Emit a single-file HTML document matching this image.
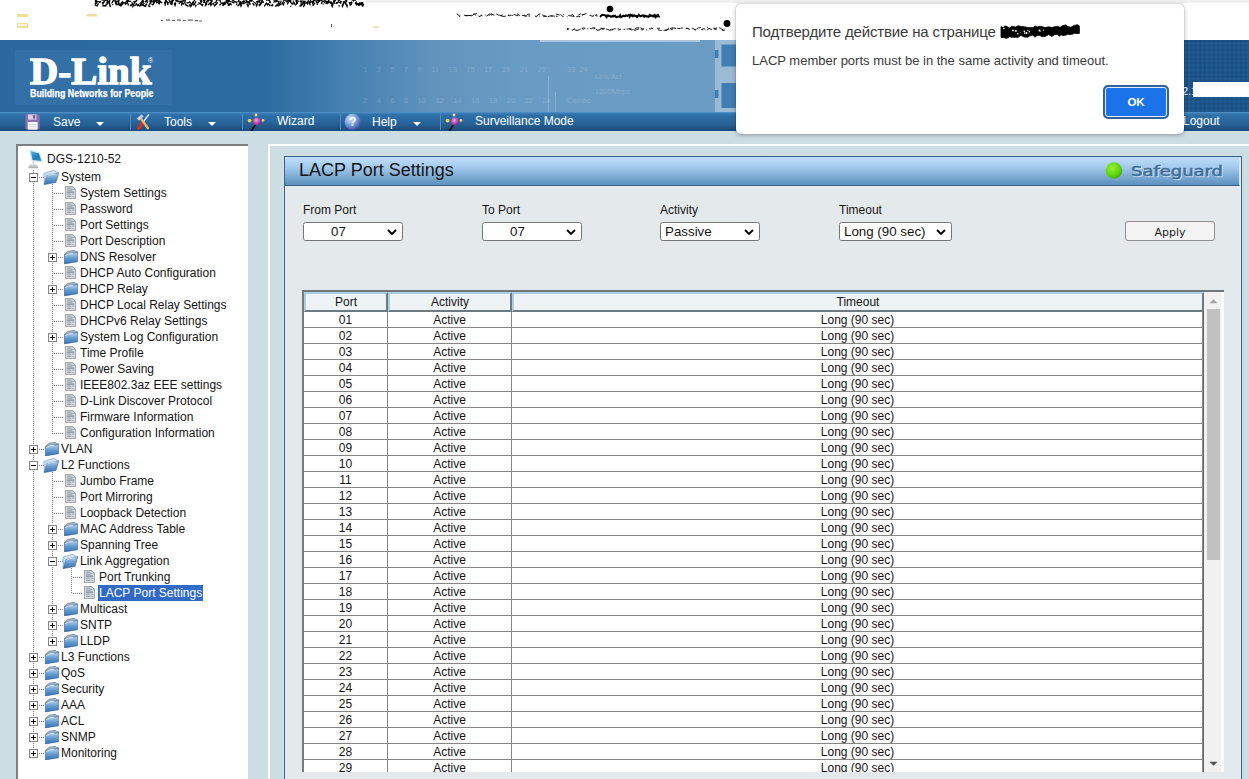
<!DOCTYPE html>
<html lang="ru">
<head>
<meta charset="utf-8">
<title>DGS-1210-52 - LACP Port Settings</title>
<style>
html,body{margin:0;padding:0}
body{width:1249px;height:779px;overflow:hidden;position:relative;background:#fff;font-family:"Liberation Sans",Arial,sans-serif;font-size:12px;color:#141414}
.abs,.ic,.tl,.hd,.vd{position:absolute}
#hdr{position:absolute;left:0;top:40px;width:1249px;height:72px;background:linear-gradient(90deg,#2a689d 0,#2c6ba0 265px,#4782b2 350px,#6294be 440px,#6a9bc2 520px,#6c9dc4 100%)}
#hdrR{position:absolute;left:1150px;top:40px;width:99px;height:72px;background-color:#205c92;background-image:linear-gradient(90deg,rgba(20,70,120,.4) 1.5px,transparent 1.5px),linear-gradient(180deg,rgba(20,70,120,.4) 1.5px,transparent 1.5px);background-size:4.5px 4.5px}
#logo{position:absolute;left:15px;top:50px;width:157px;height:55px;background:#3270a6}
#tb{position:absolute;left:0;top:112px;width:1249px;height:20px;background:linear-gradient(180deg,#3f80b8 0,#2f70a8 2px,#29669c 9px,#1b4c7c 18px,#1b4c7c 19px,#53799f 19px);border-top:1px solid #4a8cc4;box-sizing:border-box}
.fnt{color:#fff;opacity:.17;font-size:7.5px;line-height:9px;white-space:nowrap;word-spacing:7.4px}
.tbt{position:absolute;color:#fff;font-size:12px;line-height:14px;white-space:nowrap}
.sep{position:absolute;top:114px;width:1px;height:16px;background:#4d8ec7}
.arr{position:absolute;width:0;height:0;border-left:4px solid transparent;border-right:4px solid transparent;border-top:4px solid #fff}
#main{position:absolute;left:0;top:131px;width:1249px;height:648px;background:#cddde4}
#treep{position:absolute;left:16px;top:144px;width:232px;height:640px;background:#fff;border-left:2px solid #7f7f7f;border-top:2px solid #7f7f7f;box-sizing:border-box}
.tl{font-size:12px;line-height:16px;height:16px;white-space:nowrap;color:#141414;padding:0 1px}
.tl.sel{background:#316ac5;color:#fff}
.hd{height:1px;background-image:linear-gradient(90deg,#808080 50%,transparent 50%);background-size:2px 1px;background-position:0 0}
.vd{width:1px;background-image:linear-gradient(180deg,#808080 50%,transparent 50%);background-size:1px 2px}
#frame{position:absolute;left:268px;top:144px;width:990px;height:640px;border-left:2px solid #fff;border-top:2px solid #fff;box-sizing:border-box;background:#cddde4}
#panel{position:absolute;left:284px;top:156px;width:958px;height:630px;border:1px solid #3a6285;box-sizing:border-box;background:#e4eaec;box-shadow:inset 1px 0 0 #dbeffb,-1px 0 0 #cfe5f2}
#ptitle{position:absolute;left:285px;top:157px;width:955px;border-right:1px solid #cfe6f8;height:29px;background:linear-gradient(180deg,#bfdffb 0,#a6cbee 35%,#7aa8d1 72%,#5c90be 100%);border-bottom:1px solid #3a6285;box-sizing:border-box}
#ptxt{position:absolute;left:299px;top:159px;font-size:18px;line-height:22px;white-space:nowrap}
.lbl{position:absolute;top:202px;font-size:12px;line-height:16px;white-space:nowrap}
.selb{position:absolute;top:222px;height:19px;box-sizing:border-box;border:1px solid #767676;border-radius:2.5px;background:#fff;font-size:13.33px;line-height:17px;white-space:nowrap}
.selb span{position:absolute;top:0}
.selb svg{position:absolute;right:5px;top:6px}
#apply{position:absolute;left:1125px;top:221px;width:90px;height:20px;box-sizing:border-box;border:1px solid #8f8f8f;border-radius:3px;background:#f3f3f3;font-family:"DejaVu Sans","Liberation Sans",sans-serif;font-size:11px;line-height:22px;text-align:center;color:#1c1c1c}
#tbl{position:absolute;left:302px;top:290px;width:922px;height:482px;background:#fff;overflow:hidden;border-left:2px solid #787b7d;border-top:2px solid #6f777b;box-sizing:border-box}
.th{position:absolute;top:292px;height:20px;box-sizing:border-box;background:#eef3f6;border-left:2px solid #a9cfe0;border-top:2px solid #a9cfe0;border-right:2px solid #6f7a80;border-bottom:2px solid #6f7a80;font-size:12px;line-height:16px;text-align:center}
.tr{position:absolute;left:304px;width:898px;height:16px;border-bottom:1px solid #868686;box-sizing:border-box;font-size:12px;line-height:15px;background:#fff}
.tr span{position:absolute;top:0;text-align:center;height:15px;line-height:17px}
.c1{left:0;width:83px}
.c2{left:83px;width:123px;border-left:1px solid #868686}
.c3{left:207px;width:691px;border-left:1px solid #868686}
#sb{position:absolute;left:1204px;top:292px;width:20px;height:480px;background:linear-gradient(90deg,#f1f1f1 0,#f1f1f1 17px,#fbfbfb 17px)}
#vr{position:absolute;left:1202px;top:312px;width:2px;height:461px;background:linear-gradient(90deg,#8a8a8a 0,#8a8a8a 1px,#5f6467 1px)}
#sbth{position:absolute;left:1207px;top:309px;width:13px;height:251px;background:#c1c1c1}
#dlg{position:absolute;left:736px;top:4px;width:448px;height:130px;background:#fff;border-radius:5px;box-shadow:0 1px 5px rgba(0,0,0,.3),0 0 1px rgba(0,0,0,.35)}
#dt{position:absolute;left:752px;top:22px;font-size:15px;line-height:20px;color:#3a3a3a;white-space:nowrap;letter-spacing:-.16px}
#dm{position:absolute;left:752px;top:52px;font-size:13px;line-height:18px;color:#3a3a3a;white-space:nowrap}
#ok{position:absolute;left:1103px;top:85px;width:66px;height:34px;box-sizing:border-box;border-radius:5px;background:#1a73e8;border:2px solid #2f60a0;box-shadow:inset 0 0 0 1px #e4eeff;color:#fff;font-weight:bold;font-size:11.5px;line-height:30px;text-align:center}
</style>
</head>
<body>
<svg width="0" height="0" style="position:absolute">
<defs>
<symbol id="i-plus" viewBox="0 0 9 9"><rect x=".5" y=".5" width="8" height="8" fill="#fff" stroke="#848484"/><path d="M2 4.5h5M4.5 2v5" stroke="#000" stroke-width="1"/></symbol>
<symbol id="i-minus" viewBox="0 0 9 9"><rect x=".5" y=".5" width="8" height="8" fill="#fff" stroke="#848484"/><path d="M2 4.5h5" stroke="#000" stroke-width="1"/></symbol>
<symbol id="i-doc" viewBox="0 0 11 13"><path d="M.4.4H7L10.4 3.6V12.6H.4z" fill="#dfe4e9" stroke="#7f8b97" stroke-width=".8"/><path d="M7 .4V3.6H10.4z" fill="#f3f6f8" stroke="#7f8b97" stroke-width=".6"/><path d="M1.8 2.1H6M1.8 4.1H7.2" stroke="#7f8c99" stroke-width="1"/><path d="M1.8 6.1H9" stroke="#5f6c79" stroke-width="1"/><path d="M1.8 8.2H6.4M1.8 10.4H6.4" stroke="#7f8c99" stroke-width="1"/><path d="M7.4 7.6h1.6v1.3H7.4zM7.4 9.9h1.6v1.3H7.4z" fill="#9aa5b0"/></symbol>
<linearGradient id="gf" x1="0" y1="0" x2="0" y2="1"><stop offset="0" stop-color="#bcd6ee"/><stop offset=".45" stop-color="#6ba0d3"/><stop offset="1" stop-color="#3670ae"/></linearGradient>
<linearGradient id="gb" x1="0" y1="0" x2="0" y2="1"><stop offset="0" stop-color="#dbe8f5"/><stop offset="1" stop-color="#9dbfe0"/></linearGradient>
<symbol id="i-closed" viewBox="0 0 14 14"><path d="M1.3 3.6L3.8 1.3 10.4.3 11.8 1.5 13.5 1.7 13.3 4 1 5.8z" fill="#9db4cb" stroke="#54728f" stroke-width=".6"/><path d="M.5 4.5L13.7 2.4 13.5 11.8.3 13.9z" fill="url(#gf)" stroke="#3b6590" stroke-width=".6"/><path d="M1.3 5.6Q4.5 3.2 9 3.6" fill="none" stroke="#f1f7fc" stroke-width="1" opacity=".9"/></symbol>
<symbol id="i-open" viewBox="0 0 16 15"><path d="M.8 3.2L6 1.6 11.5.2 12.6 1.8 15.7 2.4 13 12.4 1.2 14.5z" fill="url(#gb)" stroke="#6c8fb3" stroke-width=".5"/><path d="M4.2 5.6L15.7 2.8 12.8 12.3 1.1 14.5z" fill="url(#gf)" stroke="#3d6793" stroke-width=".5"/><path d="M4.6 6.2Q8 4 12.5 4" fill="none" stroke="#f2f7fc" stroke-width=".8" opacity=".85"/></symbol>
<linearGradient id="gm" x1="0" y1="0" x2="1" y2="1"><stop offset="0" stop-color="#5fb4e6"/><stop offset=".6" stop-color="#1c7dbd"/><stop offset="1" stop-color="#2d8fcf"/></linearGradient>
<linearGradient id="gs" x1="0" y1="0" x2="0" y2="1"><stop offset="0" stop-color="#e4e6e8"/><stop offset="1" stop-color="#a4a8ac"/></linearGradient>
<symbol id="i-root" viewBox="0 0 18 20"><path d="M1.9 1.3L11.4 3.9 14.2 12.6 4 11.6z" fill="url(#gm)" stroke="#d5e6f3" stroke-width="1.3" stroke-linejoin="round"/><path d="M4.6 11.6h1.6v3h-1.6z" fill="#c9ced3"/><path d="M.3 19.3a5 4.6 0 0 1 10 0z" fill="url(#gs)"/></symbol>
</defs>
</svg>

<!-- top strip scribbles -->
<svg class="abs" style="left:0;top:0" width="1249" height="40">
<rect x="366" y="0" width="883" height="3" fill="#f0f0f0"/>
<path d="M95.0 2.4 L97.0 5.9 L98.8 2.8 L100.9 0.4 L102.8 3.7 L105.3 -0.3 L106.8 -0.3 L109.3 4.2 L110.3 6.4 L113.1 3.9 L115.2 0.2 L116.2 3.0 L117.3 0.4 L118.7 -0.8 L120.5 2.3 L123.1 2.9 L125.2 2.7 L127.4 2.4 L128.9 6.5 L131.8 5.3 L134.1 1.4 L135.5 1.2 L136.5 4.7 L138.2 5.3 L139.9 6.2 L142.5 -1.0 L143.8 5.8 L145.7 6.4 L147.4 -0.5 L149.5 4.8 L151.0 -0.3 L152.6 6.2 L155.0 -0.1 L156.4 -0.2 L157.4 5.0 L158.7 3.2 L160.5 0.4 L162.9 -0.0 L165.0 -0.1 L166.8 0.6 L168.3 6.3 L170.7 1.3 L173.4 0.6 L175.1 5.4 L177.2 -0.2 L180.1 0.6 L181.5 4.8 L183.1 1.2 L184.2 -0.3 L186.2 0.8 L188.3 1.8 L190.1 6.2 L192.0 3.3 L194.6 0.4 L195.8 5.8 L198.3 0.9 L199.7 4.5 L202.4 0.5 L205.1 5.6 L207.2 2.2 L208.4 -0.7 L211.2 0.8 L213.5 0.9 L216.0 3.5 L217.5 0.3 L219.8 -0.5 L221.2 3.2 L223.8 3.6 L225.2 5.9 L226.6 -0.9 L228.0 2.3 L229.1 0.3 L230.8 3.3 L232.0 1.7 L234.6 6.4 L236.8 4.2 L238.9 0.1 L239.9 -0.9 L242.5 4.3 L245.3 -0.8 L247.5 2.6 L249.8 1.4 L252.7 -0.4 L254.7 4.5 L257.3 4.5 L259.6 4.9 L262.3 1.6 L264.5 5.8 L267.2 2.1 L269.6 5.5 L271.6 3.7 L273.3 3.4 L275.4 -0.4 L277.6 6.4 L280.2 4.5 L281.9 4.5 L284.0 2.3 L286.5 -0.4 L288.9 -0.8 L291.0 2.6 L292.4 4.2 L294.2 3.6 L296.9 0.9 L297.9 1.3 L300.2 0.5 L301.4 5.8 L303.6 2.3 L306.3 1.5 L308.5 0.5 L310.3 5.0 L312.9 5.6 L314.6 3.4 L316.2 0.0 L318.1 5.3 L320.6 4.3 L323.4 1.1 L324.7 2.4 L326.1 0.6 L327.9 3.7 L329.8 1.4 L332.3 6.4 L334.1 -0.4 L335.1 5.5 L336.2 4.3 L338.2 1.3 L340.6 -0.9 L341.9 2.4 L342.8 5.2 L344.2 0.1 L345.3 3.7 L347.1 3.7 L349.3 5.1 L352.1 4.1 L353.4 2.6 L354.7 -0.9 L356.5 4.4 L357.8 1.0 L359.4 4.2 L361.4 3.6 L363.7 2.0" fill="none" stroke="#000" stroke-width="1.3" stroke-dasharray="2 1 4 6 4 2 4 4 2 6"/>
<path d="M95.0 5.7 L96.0 3.1 L98.2 2.8 L100.7 1.6 L102.2 6.4 L103.4 5.5 L105.8 5.9 L107.0 0.8 L108.7 -0.3 L110.2 6.3 L113.0 1.0 L115.3 -0.9 L117.2 -0.7 L118.8 2.2 L120.3 5.9 L121.6 5.5 L123.4 -0.7 L125.4 4.1 L128.1 2.5 L130.9 5.8 L132.8 4.1 L134.6 5.6 L136.7 4.2 L139.1 2.3 L141.1 5.2 L143.1 0.2 L145.0 5.8 L146.5 4.0 L149.2 5.5 L151.3 1.3 L152.5 3.1 L154.0 2.7 L155.7 -0.1 L156.7 1.8 L158.7 -0.7 L161.4 3.1 L164.2 -0.1 L165.3 0.3 L168.0 2.4 L170.7 5.0 L172.5 0.8 L174.3 1.5 L177.0 6.0 L179.7 2.9 L180.9 2.1 L181.9 1.0 L184.2 6.3 L185.2 0.2 L186.1 1.1 L188.5 0.8 L190.4 2.7 L192.4 5.4 L194.6 4.4 L196.8 5.6 L197.8 3.7 L200.4 3.6 L202.3 5.5 L204.3 0.6 L205.7 3.1 L207.7 0.0 L210.4 3.7 L212.0 0.4 L214.1 5.7 L215.4 4.8 L216.7 -0.3 L219.4 -0.0 L220.5 1.9 L222.3 6.1 L224.3 4.3 L225.6 3.7 L228.1 -0.3 L230.1 1.7 L232.6 1.7 L234.9 3.8 L236.5 6.5 L239.0 5.0 L240.9 -0.8 L243.3 3.6 L246.0 2.6 L247.3 -0.1 L248.6 0.2 L250.0 4.0 L252.1 0.0 L254.3 -0.4 L255.5 1.9 L257.2 1.7 L258.6 1.8 L260.7 -0.7 L262.1 2.1 L263.7 1.8 L266.4 3.5 L267.5 4.9 L269.1 -0.4 L271.6 5.6 L274.3 6.0 L276.4 0.4 L278.4 1.6 L280.8 1.1 L282.0 4.6 L283.2 6.0 L284.4 1.5 L286.4 1.8 L288.2 0.4 L289.5 0.4 L292.0 1.3 L293.1 5.7 L296.0 5.8 L297.0 1.0 L299.8 1.2 L301.1 2.0 L302.4 -0.4 L304.4 2.7 L305.7 -0.1 L307.4 3.3 L308.6 -0.2 L310.0 2.3 L311.9 4.7 L314.1 -0.9 L315.5 1.1 L317.1 3.1 L318.9 2.9 L321.4 -0.3 L323.2 3.8 L325.2 4.0 L328.0 1.9 L330.7 1.9 L333.5 5.4 L335.5 3.5 L337.2 2.7 L338.7 2.0 L340.3 3.0 L342.1 1.0 L344.9 4.0 L347.2 -0.8 L349.7 3.4 L351.8 2.1 L354.1 -0.6 L355.6 2.0 L357.7 4.4 L359.2 5.0 L360.6 4.4 L362.0 4.7 L363.1 -0.3" fill="none" stroke="#000" stroke-width="1.3" stroke-dasharray="4 2 2 5 6 1 1 5 4 4"/>
<path d="M95.0 -0.1 L97.6 1.7 L98.8 1.7 L100.0 2.1 L102.1 3.8 L104.4 1.7 L106.7 5.1 L108.0 1.2 L109.2 2.6 L111.1 1.3 L113.0 5.3 L114.4 3.6 L116.8 4.2 L118.1 1.1 L119.5 6.1 L121.4 3.9 L122.7 4.1 L124.9 -0.9 L126.3 -0.8 L127.3 0.7 L128.8 4.7 L131.5 0.2 L132.9 6.4 L134.8 1.7 L136.3 2.7 L137.5 5.5 L140.0 2.4 L142.5 5.3 L144.9 2.3 L147.3 1.9 L148.6 0.2 L151.1 3.5 L152.6 4.7 L155.1 0.4 L157.3 3.4 L159.1 1.4 L161.1 2.2 L163.1 5.1 L165.0 5.2 L165.9 1.3 L168.6 3.5 L170.9 2.7 L173.3 1.5 L175.9 0.6 L178.1 1.5 L180.8 1.4 L182.6 3.5 L185.2 4.2 L186.7 3.0 L189.6 2.4 L190.9 6.3 L193.3 2.9 L194.4 5.2 L195.4 4.1 L197.4 5.0 L199.8 1.8 L201.5 0.2 L203.6 0.3 L204.7 2.4 L207.2 5.1 L208.6 -0.6 L209.9 1.2 L210.9 5.3 L212.6 3.4 L214.1 3.1 L215.7 1.1 L216.9 1.4 L217.9 3.9 L219.0 5.1 L220.8 4.3 L222.6 5.8 L224.2 2.4 L225.9 5.1 L227.4 0.0 L229.3 5.0 L230.4 3.6 L231.4 4.7 L234.3 1.6 L235.2 1.8 L236.3 2.5 L238.3 -0.8 L240.0 -0.9 L241.1 5.9 L243.8 0.8 L245.1 3.8 L247.3 1.4 L249.0 3.0 L250.5 5.6 L252.3 4.5 L253.8 0.2 L256.5 5.8 L258.9 -0.9 L260.8 5.0 L262.3 0.5 L264.0 3.4 L266.1 2.5 L268.0 2.3 L270.6 2.0 L273.3 6.0 L275.4 6.1 L277.4 5.4 L279.3 2.0 L282.1 4.0 L284.5 -0.3 L287.1 2.0 L288.4 0.0 L290.9 6.3 L293.4 4.8 L295.8 -0.6 L298.5 5.7 L301.1 5.8 L302.9 0.8 L304.7 5.6 L306.4 4.8 L307.7 5.8 L310.1 -0.0 L312.5 3.6 L314.4 -0.6 L316.5 0.3 L317.8 5.9 L319.0 -0.0 L320.7 3.6 L322.6 5.7 L324.9 -0.4 L327.3 3.1 L329.2 -0.9 L330.5 0.4 L332.7 4.9 L334.5 -0.7 L336.2 2.7 L339.0 6.2 L340.5 2.0 L342.5 6.5 L344.8 -0.5 L345.9 0.1 L348.1 4.1 L350.4 4.9 L351.6 2.3 L354.2 4.3 L356.1 1.2 L357.2 4.8 L359.8 5.3 L362.1 5.8 L363.4 3.7" fill="none" stroke="#000" stroke-width="1.3" stroke-dasharray="6 3 3 4 5 6 1 3 2 2"/>
<path d="M95.0 1.8 L96.2 1.3 L97.6 2.5 L99.8 2.4 L101.5 -0.2 L103.6 -0.0 L105.8 0.3 L107.1 -0.7 L108.9 4.3 L110.0 -0.8 L112.9 2.3 L115.3 1.6 L117.8 6.0 L119.0 0.5 L120.2 4.2 L122.1 5.9 L124.2 4.5 L126.4 1.4 L128.8 0.8 L131.6 3.0 L133.1 0.4 L134.6 2.3 L136.6 0.5 L138.2 1.2 L139.3 4.4 L140.8 3.0 L142.3 0.8 L144.4 2.9 L146.4 0.5 L149.2 6.5 L151.5 6.0 L153.5 -0.8 L155.7 4.8 L156.9 2.6 L158.6 1.5 L159.8 5.5 L161.2 5.6 L163.0 4.5 L164.4 3.3 L166.4 -0.5 L169.1 0.3 L171.5 5.7 L173.1 0.1 L175.8 -1.0 L178.0 1.7 L180.4 1.7 L181.7 3.5 L184.2 2.4 L185.9 4.9 L188.6 6.5 L189.8 4.7 L192.4 5.8 L194.5 3.8 L196.9 0.2 L198.6 -0.8 L200.6 -0.1 L202.3 1.5 L203.5 0.8 L206.2 -0.6 L208.7 4.4 L211.1 2.0 L213.0 -0.2 L214.6 5.7 L217.3 3.2 L219.0 1.1 L221.7 2.5 L224.3 4.2 L226.9 -0.1 L228.0 6.0 L229.6 2.9 L231.4 -0.8 L234.0 1.2 L236.2 2.2 L237.8 1.4 L240.3 5.6 L242.9 0.8 L245.4 0.8 L248.0 6.3 L249.9 -0.2 L252.6 3.1 L254.8 6.1 L257.4 6.5 L259.7 5.5 L261.4 3.1 L263.4 0.2 L265.6 2.2 L266.8 -0.5 L268.7 -0.0 L271.3 3.3 L273.2 1.2 L275.5 -0.8 L276.8 2.3 L278.6 3.0 L279.8 4.2 L281.2 1.3 L283.0 1.4 L284.6 0.1 L287.0 4.8 L289.6 0.5 L292.2 4.2 L293.2 1.4 L295.8 5.7 L296.8 3.8 L299.1 3.2 L301.0 0.8 L303.8 6.3 L306.0 1.3 L308.5 6.2 L310.0 2.2 L312.6 1.5 L315.3 4.8 L317.1 0.3 L319.7 -0.1 L321.9 1.0 L324.3 2.8 L325.8 1.0 L328.2 2.9 L329.4 2.9 L332.2 5.7 L333.5 0.7 L334.7 4.0 L336.5 -0.4 L339.2 -0.4 L341.9 -0.9 L344.0 3.0 L345.7 3.3 L347.0 6.4 L348.3 0.3 L350.6 -0.8 L353.1 0.1 L355.8 3.7 L358.4 3.4 L359.4 5.7 L360.5 -0.5 L362.9 5.8 L364.5 2.6" fill="none" stroke="#000" stroke-width="1.3" stroke-dasharray="3 5 6 6 5 6 5 2 5 2"/>
<path d="M457.0 13.9 L459.4 15.8 L462.2 14.4 L465.3 16.0 L467.3 15.4 L470.8 15.6 L472.8 14.2 L476.6 13.7 L479.1 16.6 L481.2 15.6 L484.1 16.3 L486.7 16.0 L490.2 13.6 L491.8 14.1 L494.8 15.5 L498.0 15.7 L499.4 15.0 L502.5 16.4 L505.8 16.2 L509.0 15.2 L512.0 15.3 L514.3 14.4 L516.9 15.8 L519.8 15.1 L521.9 15.1 L525.0 16.0 L528.8 13.9 L532.0 15.6 L533.7 16.1 L536.4 16.9 L537.7 14.9 L540.3 13.8 L543.1 15.2 L546.8 16.9 L549.9 16.0 L553.7 15.6 L555.8 13.9 L559.3 15.0 L560.8 14.3 L562.9 16.8 L566.6 14.3 L568.3 15.5 L572.2 16.1 L575.0 16.7 L578.6 16.7 L580.4 16.5 L584.1 14.2 L586.4 13.7 L588.8 14.4 L592.1 16.3 L594.7 14.9 L597.5 16.2" fill="none" stroke="#000" stroke-width="0.9" stroke-dasharray="4 6 6 2 4 2 5 4 4 1"/>
<path d="M457.0 13.7 L459.0 16.8 L461.9 15.3 L465.2 15.3 L467.9 15.8 L469.8 13.9 L471.3 16.0 L474.6 14.0 L476.5 16.4 L478.1 17.0 L481.6 15.1 L485.1 14.8 L487.1 16.6 L490.1 14.6 L493.0 15.2 L494.8 15.3 L496.4 14.2 L498.8 15.2 L501.9 15.3 L504.6 14.6 L507.1 14.8 L510.7 16.4 L513.4 15.1 L515.0 15.3 L517.2 13.9 L519.5 15.6 L521.2 16.5 L524.4 15.2 L525.7 16.2 L529.0 15.8 L530.5 16.5 L533.2 14.7 L534.8 16.2 L537.1 16.2 L539.1 16.3 L540.7 15.2 L543.3 16.8 L545.3 16.0 L547.2 16.7 L549.0 16.2 L551.2 16.0 L553.9 16.1 L557.5 16.3 L560.1 14.4 L563.6 14.6 L567.3 16.7 L568.9 16.7 L572.5 14.5 L574.8 16.5 L576.9 16.0 L580.5 13.8 L581.9 14.6 L584.2 14.5 L587.6 16.6 L590.6 14.8 L592.7 16.6 L594.1 16.0 L596.0 13.8 L597.4 15.4" fill="none" stroke="#000" stroke-width="0.9" stroke-dasharray="1 3 1 4 4 4 4 1 2 6"/>
<path d="M600.0 16.0 L601.2 15.6 L603.4 14.9 L604.5 15.2 L606.2 15.2 L607.0 16.1 L608.3 15.2 L609.8 16.5 L611.4 16.4 L613.0 17.0 L615.2 15.5 L616.5 17.2 L617.7 16.6 L619.5 16.6 L621.7 17.0 L622.7 16.4 L624.1 16.2 L625.4 15.4 L627.3 16.1 L628.4 15.2 L629.7 15.0 L631.2 14.9 L632.0 14.7 L632.9 16.6 L633.8 15.9 L635.8 15.9 L636.8 17.1 L638.8 14.7 L639.9 16.0 L641.9 15.7 L643.7 15.3 L645.5 15.5 L646.8 16.8 L648.8 17.0 L650.4 15.8 L652.2 16.4 L654.2 16.9 L655.1 15.6 L656.9 15.2 L657.9 14.5 L659.5 17.3" fill="none" stroke="#000" stroke-width="1.5"/>
<path d="M600.0 17.3 L602.2 14.6 L604.1 14.9 L604.9 15.4 L606.7 17.5 L607.6 15.5 L608.4 16.1 L609.9 15.6 L611.1 16.9 L613.1 15.4 L614.5 16.4 L616.4 17.4 L617.7 16.6 L619.3 16.9 L620.2 15.0 L621.1 17.3 L622.3 16.0 L623.2 15.5 L624.0 16.2 L625.0 16.4 L626.1 15.2 L627.6 15.6 L628.7 14.7 L629.6 17.2 L630.8 14.7 L631.8 16.0 L634.1 15.1 L636.1 16.0 L637.5 16.9 L638.8 14.7 L640.4 16.5 L642.1 15.3 L644.2 17.1 L646.5 15.8 L648.5 16.7 L649.5 14.6 L650.5 14.9 L651.4 15.6 L653.2 15.4 L654.8 14.5 L655.8 17.4 L656.6 16.1 L658.6 16.9" fill="none" stroke="#000" stroke-width="1.5"/>
<circle cx="610" cy="9" r="3.3" fill="#000"/>
<path d="M567.0 30.2 L569.7 27.5 L571.2 28.5 L574.2 29.0 L576.0 30.5 L578.7 28.8 L580.7 27.7 L583.5 29.3 L585.3 28.1 L586.9 27.6 L588.4 28.4 L590.1 28.5 L591.7 28.6 L593.3 27.6 L595.5 27.7 L596.9 30.4 L600.1 29.8 L601.4 28.0 L602.8 29.3 L605.3 28.5 L607.7 30.3 L610.1 29.8 L613.4 29.9 L614.8 28.7 L618.2 30.1 L621.3 29.1 L622.5 29.7 L625.3 30.2 L626.6 29.3 L628.6 28.8 L631.5 28.8 L635.1 30.3 L636.6 29.7 L639.5 28.8 L641.9 30.0 L644.3 28.6 L646.8 27.6 L650.2 29.1 L652.5 28.4 L653.8 27.7 L655.8 29.1 L657.7 28.3 L660.4 28.1 L662.8 29.2 L664.1 30.4 L667.1 30.2 L668.6 28.1 L672.0 29.9 L673.5 27.8 L675.0 28.3 L676.8 28.1 L678.1 28.5 L680.5 28.5 L682.2 27.5 L684.5 29.0 L688.0 28.2 L689.4 28.8 L692.4 30.1 L693.8 29.0 L695.1 30.1 L698.7 27.7 L702.1 29.9 L703.8 28.5 L707.2 30.4 L708.9 28.4 L711.1 29.3 L712.4 29.5 L714.7 29.0 L716.1 29.4 L718.6 28.4 L722.1 30.4 L724.6 30.5" fill="none" stroke="#000" stroke-width="0.9" stroke-dasharray="3 6 3 6 3 6 5 2 6 2"/>
<path d="M567.0 28.0 L568.5 29.6 L570.8 27.9 L572.3 30.3 L575.0 28.6 L576.6 30.5 L579.5 29.7 L581.6 28.4 L583.7 27.9 L586.5 28.8 L589.6 28.7 L591.9 29.0 L595.4 28.5 L598.3 28.2 L600.9 28.4 L604.2 28.4 L607.4 29.5 L609.7 30.3 L611.8 29.7 L614.5 28.8 L615.8 28.8 L617.7 28.8 L621.2 28.4 L624.1 29.5 L625.8 28.7 L627.4 30.2 L629.2 28.8 L631.2 30.0 L634.4 29.3 L636.9 27.8 L640.3 27.8 L642.4 28.6 L645.3 29.5 L647.3 30.2 L650.8 27.6 L653.5 28.9 L655.6 28.9 L657.6 29.5 L660.2 30.4 L663.7 30.5 L665.9 30.0 L668.7 29.6 L672.2 27.7 L674.6 28.7 L677.3 28.2 L680.9 28.1 L683.0 27.9 L685.1 29.7 L686.5 28.0 L689.3 29.4 L692.3 28.3 L695.4 29.7 L698.5 27.9 L700.8 27.5 L704.1 30.3 L707.4 27.6 L709.5 29.1 L712.0 27.8 L715.0 28.4 L717.5 27.9 L720.0 27.9 L721.4 29.0 L723.3 29.8 L725.1 28.7" fill="none" stroke="#000" stroke-width="0.9" stroke-dasharray="2 5 4 2 5 1 4 2 1 5"/>
<circle cx="727" cy="23.5" r="3.4" fill="#000"/>
<rect x="17" y="14" width="11" height="3" fill="#efdf9c"/><rect x="17" y="23" width="11" height="5" fill="#efdf9c"/><rect x="18" y="24.5" width="9" height="1.5" fill="#fff"/>
<rect x="87" y="14" width="10" height="2.5" fill="#efdf9c"/>
<rect x="373" y="26.5" width="6" height="1.2" fill="#e2d48a"/><rect x="331" y="24" width="1" height="3" fill="#555"/>
<path d="M161 20.5h2M166 20.2h4M172 20.5h3M177 20.2h4M183 20.5h3M188 20.2h5M195 20.6h3M199 21h3" stroke="#666" stroke-width="1.2"/>
</svg>

<div id="hdr"></div>
<div id="hdrR"></div>
<div id="logo"></div>
<div class="abs" id="dlink" style="left:30px;top:52px;color:#fff;font-family:'Liberation Serif',serif;font-weight:bold;font-size:37px;line-height:40px;white-space:nowrap;-webkit-text-stroke:1.3px #fff;transform:scaleX(1.055);transform-origin:0 0">D-Link</div>
<div class="abs" style="left:148px;top:57px;color:#fff;font-size:7px;line-height:8px">®</div>
<div class="abs" id="tag" style="left:30px;top:87px;color:#fff;font-weight:bold;font-size:10px;line-height:14px;white-space:nowrap;-webkit-text-stroke:.25px #fff;transform:scaleX(.885);transform-origin:0 0">Building Networks for People</div>
<svg class="abs" style="left:714px;top:40px" width="30" height="72"><rect x="1" y="0" width="29" height="72" fill="#9bbbd5"/><rect x="7.5" y="4.5" width="23" height="22" fill="#3f7db3"/><rect x="7.5" y="43" width="23" height="25" fill="#3f7db3"/><rect x="1" y="10" width="3.5" height="8" fill="#3f7db3"/><rect x="1" y="50" width="3.5" height="8" fill="#3f7db3"/></svg>
<div class="abs" style="left:1193px;top:82px;width:56px;height:15px;background:#fff"></div>
<div class="abs" style="left:1182px;top:84px;color:#fff;font-size:11px;line-height:14px">2.1</div>
<div class="abs fnt" style="left:363px;top:65px">1 3 5 7 9 11 13 15 17 19 21 23</div>
<div class="abs fnt" style="left:363px;top:96px">2 4 6 8 10 12 14 16 18 20 22 24</div>
<div class="abs fnt" style="left:567px;top:65px;word-spacing:2px">33 24</div>
<div class="abs fnt" style="left:567px;top:96px">Combo</div>
<div class="abs fnt" style="left:595px;top:72px">Link/Act</div>
<div class="abs fnt" style="left:595px;top:87px">1000Mbps</div>
<div class="abs" style="left:548px;top:76px;width:1px;height:36px;background:#fff;opacity:.2"></div><div class="abs" style="left:555px;top:92px;width:1px;height:20px;background:#fff;opacity:.2"></div>
<div class="abs" style="left:540px;top:40px;width:160px;height:2px;background:rgba(225,232,238,.55)"></div>
<div id="tb"></div>
<span class="tbt" style="left:53px;top:115px">Save</span><i class="arr" style="left:96px;top:122px"></i>
<i class="sep" style="left:130px"></i>
<span class="tbt" style="left:164px;top:115px">Tools</span><i class="arr" style="left:208px;top:122px"></i>
<i class="sep" style="left:242px"></i>
<span class="tbt" style="left:277px;top:114px">Wizard</span>
<i class="sep" style="left:340px"></i>
<span class="tbt" style="left:372px;top:115px">Help</span><i class="arr" style="left:413px;top:122px"></i>
<i class="sep" style="left:440px"></i>
<span class="tbt" style="left:475px;top:114px">Surveillance Mode</span>
<span class="tbt" style="left:1183px;top:114px">Logout</span>

<svg class="abs" style="left:25px;top:114px" width="15" height="16"><rect x=".4" y=".4" width="14.2" height="15.2" rx="1" fill="#8870ac"/><rect x="3" y=".4" width="8.4" height="5.2" fill="#d9d0e7"/><rect x="8" y="1.2" width="2.2" height="3.4" fill="#6d5296"/><rect x="2.8" y="8" width="9.8" height="7.6" fill="#fcfcfe"/><path d="M4 10.5h7.4M4 12.7h7.4" stroke="#cfcfdc" stroke-width="1"/></svg>
<svg class="abs" style="left:136px;top:114px" width="14" height="16"><path d="M12.6.8L7.2 8" stroke="#eaf0f6" stroke-width="1.4" stroke-linecap="round"/><path d="M6.6 8.6L2.6 14.3" stroke="#d9301e" stroke-width="3.2" stroke-linecap="round"/><path d="M5.2 5L12 14.3" stroke="#e6b56c" stroke-width="2.3" stroke-linecap="round"/><path d="M.6 4.6L5.6.6 7.6 2.6 3 6.4z" fill="#cdd2d8"/></svg>
<svg class="abs" style="left:246px;top:112px" width="20" height="20"><defs><radialGradient id="gw" cx=".4" cy=".35" r=".7"><stop offset="0" stop-color="#f0a8e6"/><stop offset=".6" stop-color="#b844ad"/><stop offset="1" stop-color="#7d2a78"/></radialGradient></defs><path d="M9.5 12.5L5.2 19.2" stroke="#0a0a0a" stroke-width="1.7" stroke-linecap="round"/><circle cx="11" cy="9.4" r="3.9" fill="url(#gw)"/><circle cx="3.6" cy="8.6" r="1.9" fill="#ecd24a"/><circle cx="10" cy="3" r="1.4" fill="#efdc7a"/><circle cx="17" cy="8.4" r="1.4" fill="#ecd460"/></svg>
<svg class="abs" style="left:443.5px;top:112px" width="20" height="20"><path d="M9.5 12.5L5.2 19.2" stroke="#0a0a0a" stroke-width="1.7" stroke-linecap="round"/><circle cx="11" cy="9.4" r="3.9" fill="url(#gw)"/><circle cx="3.6" cy="8.6" r="1.9" fill="#ecd24a"/><circle cx="10" cy="3" r="1.4" fill="#efdc7a"/><circle cx="17" cy="8.4" r="1.4" fill="#ecd460"/></svg>
<svg class="abs" style="left:344px;top:113px" width="18" height="18"><defs><radialGradient id="gh" cx=".35" cy=".3" r=".8"><stop offset="0" stop-color="#d3e2fa"/><stop offset=".45" stop-color="#7fa3e0"/><stop offset="1" stop-color="#26459a"/></radialGradient></defs><circle cx="8.8" cy="9" r="8.2" fill="url(#gh)"/><text x="8.6" y="13" text-anchor="middle" font-family="'Liberation Sans',sans-serif" font-weight="bold" font-size="12" fill="#fff">?</text></svg>
<div id="main"></div>
<div id="treep"></div>
<svg class="ic" style="left:28px;top:149px" width="18" height="20"><use href="#i-root"/></svg>
<span class="tl" style="left:46px;top:151px">DGS-1210-52</span>
<svg class="ic" style="left:29px;top:173px" width="9" height="9"><use href="#i-minus"/></svg>
<i class="hd" style="left:39px;top:177px;width:5px"></i>
<svg class="ic" style="left:43.2px;top:170.3px" width="16" height="15"><use href="#i-open"/></svg>
<span class="tl" style="left:60px;top:169px">System</span>
<i class="hd" style="left:54px;top:193px;width:10px"></i>
<svg class="ic" style="left:65.3px;top:186.3px" width="11" height="13"><use href="#i-doc"/></svg>
<span class="tl" style="left:79px;top:185px">System Settings</span>
<i class="hd" style="left:54px;top:209px;width:10px"></i>
<svg class="ic" style="left:65.3px;top:202.3px" width="11" height="13"><use href="#i-doc"/></svg>
<span class="tl" style="left:79px;top:201px">Password</span>
<i class="hd" style="left:54px;top:225px;width:10px"></i>
<svg class="ic" style="left:65.3px;top:218.3px" width="11" height="13"><use href="#i-doc"/></svg>
<span class="tl" style="left:79px;top:217px">Port Settings</span>
<i class="hd" style="left:54px;top:241px;width:10px"></i>
<svg class="ic" style="left:65.3px;top:234.3px" width="11" height="13"><use href="#i-doc"/></svg>
<span class="tl" style="left:79px;top:233px">Port Description</span>
<svg class="ic" style="left:48px;top:253px" width="9" height="9"><use href="#i-plus"/></svg>
<i class="hd" style="left:58px;top:257px;width:5px"></i>
<svg class="ic" style="left:64px;top:250.2px" width="14" height="14"><use href="#i-closed"/></svg>
<span class="tl" style="left:79px;top:249px">DNS Resolver</span>
<i class="hd" style="left:54px;top:273px;width:10px"></i>
<svg class="ic" style="left:65.3px;top:266.3px" width="11" height="13"><use href="#i-doc"/></svg>
<span class="tl" style="left:79px;top:265px">DHCP Auto Configuration</span>
<svg class="ic" style="left:48px;top:285px" width="9" height="9"><use href="#i-plus"/></svg>
<i class="hd" style="left:58px;top:289px;width:5px"></i>
<svg class="ic" style="left:64px;top:282.2px" width="14" height="14"><use href="#i-closed"/></svg>
<span class="tl" style="left:79px;top:281px">DHCP Relay</span>
<i class="hd" style="left:54px;top:305px;width:10px"></i>
<svg class="ic" style="left:65.3px;top:298.3px" width="11" height="13"><use href="#i-doc"/></svg>
<span class="tl" style="left:79px;top:297px">DHCP Local Relay Settings</span>
<i class="hd" style="left:54px;top:321px;width:10px"></i>
<svg class="ic" style="left:65.3px;top:314.3px" width="11" height="13"><use href="#i-doc"/></svg>
<span class="tl" style="left:79px;top:313px">DHCPv6 Relay Settings</span>
<svg class="ic" style="left:48px;top:333px" width="9" height="9"><use href="#i-plus"/></svg>
<i class="hd" style="left:58px;top:337px;width:5px"></i>
<svg class="ic" style="left:64px;top:330.2px" width="14" height="14"><use href="#i-closed"/></svg>
<span class="tl" style="left:79px;top:329px">System Log Configuration</span>
<i class="hd" style="left:54px;top:353px;width:10px"></i>
<svg class="ic" style="left:65.3px;top:346.3px" width="11" height="13"><use href="#i-doc"/></svg>
<span class="tl" style="left:79px;top:345px">Time Profile</span>
<i class="hd" style="left:54px;top:369px;width:10px"></i>
<svg class="ic" style="left:65.3px;top:362.3px" width="11" height="13"><use href="#i-doc"/></svg>
<span class="tl" style="left:79px;top:361px">Power Saving</span>
<i class="hd" style="left:54px;top:385px;width:10px"></i>
<svg class="ic" style="left:65.3px;top:378.3px" width="11" height="13"><use href="#i-doc"/></svg>
<span class="tl" style="left:79px;top:377px">IEEE802.3az EEE settings</span>
<i class="hd" style="left:54px;top:401px;width:10px"></i>
<svg class="ic" style="left:65.3px;top:394.3px" width="11" height="13"><use href="#i-doc"/></svg>
<span class="tl" style="left:79px;top:393px">D-Link Discover Protocol</span>
<i class="hd" style="left:54px;top:417px;width:10px"></i>
<svg class="ic" style="left:65.3px;top:410.3px" width="11" height="13"><use href="#i-doc"/></svg>
<span class="tl" style="left:79px;top:409px">Firmware Information</span>
<i class="hd" style="left:54px;top:433px;width:10px"></i>
<svg class="ic" style="left:65.3px;top:426.3px" width="11" height="13"><use href="#i-doc"/></svg>
<span class="tl" style="left:79px;top:425px">Configuration Information</span>
<svg class="ic" style="left:29px;top:445px" width="9" height="9"><use href="#i-plus"/></svg>
<i class="hd" style="left:39px;top:449px;width:5px"></i>
<svg class="ic" style="left:45px;top:442.2px" width="14" height="14"><use href="#i-closed"/></svg>
<span class="tl" style="left:60px;top:441px">VLAN</span>
<svg class="ic" style="left:29px;top:461px" width="9" height="9"><use href="#i-minus"/></svg>
<i class="hd" style="left:39px;top:465px;width:5px"></i>
<svg class="ic" style="left:43.2px;top:458.3px" width="16" height="15"><use href="#i-open"/></svg>
<span class="tl" style="left:60px;top:457px">L2 Functions</span>
<i class="hd" style="left:54px;top:481px;width:10px"></i>
<svg class="ic" style="left:65.3px;top:474.3px" width="11" height="13"><use href="#i-doc"/></svg>
<span class="tl" style="left:79px;top:473px">Jumbo Frame</span>
<i class="hd" style="left:54px;top:497px;width:10px"></i>
<svg class="ic" style="left:65.3px;top:490.3px" width="11" height="13"><use href="#i-doc"/></svg>
<span class="tl" style="left:79px;top:489px">Port Mirroring</span>
<i class="hd" style="left:54px;top:513px;width:10px"></i>
<svg class="ic" style="left:65.3px;top:506.3px" width="11" height="13"><use href="#i-doc"/></svg>
<span class="tl" style="left:79px;top:505px">Loopback Detection</span>
<svg class="ic" style="left:48px;top:525px" width="9" height="9"><use href="#i-plus"/></svg>
<i class="hd" style="left:58px;top:529px;width:5px"></i>
<svg class="ic" style="left:64px;top:522.2px" width="14" height="14"><use href="#i-closed"/></svg>
<span class="tl" style="left:79px;top:521px">MAC Address Table</span>
<svg class="ic" style="left:48px;top:541px" width="9" height="9"><use href="#i-plus"/></svg>
<i class="hd" style="left:58px;top:545px;width:5px"></i>
<svg class="ic" style="left:64px;top:538.2px" width="14" height="14"><use href="#i-closed"/></svg>
<span class="tl" style="left:79px;top:537px">Spanning Tree</span>
<svg class="ic" style="left:48px;top:557px" width="9" height="9"><use href="#i-minus"/></svg>
<i class="hd" style="left:58px;top:561px;width:5px"></i>
<svg class="ic" style="left:62.2px;top:554.3px" width="16" height="15"><use href="#i-open"/></svg>
<span class="tl" style="left:79px;top:553px">Link Aggregation</span>
<i class="hd" style="left:73px;top:577px;width:10px"></i>
<svg class="ic" style="left:84.3px;top:570.3px" width="11" height="13"><use href="#i-doc"/></svg>
<span class="tl" style="left:98px;top:569px">Port Trunking</span>
<i class="hd" style="left:73px;top:593px;width:10px"></i>
<svg class="ic" style="left:84.3px;top:586.3px" width="11" height="13"><use href="#i-doc"/></svg>
<span class="tl sel" style="left:98px;top:585px">LACP Port Settings</span>
<svg class="ic" style="left:48px;top:605px" width="9" height="9"><use href="#i-plus"/></svg>
<i class="hd" style="left:58px;top:609px;width:5px"></i>
<svg class="ic" style="left:64px;top:602.2px" width="14" height="14"><use href="#i-closed"/></svg>
<span class="tl" style="left:79px;top:601px">Multicast</span>
<svg class="ic" style="left:48px;top:621px" width="9" height="9"><use href="#i-plus"/></svg>
<i class="hd" style="left:58px;top:625px;width:5px"></i>
<svg class="ic" style="left:64px;top:618.2px" width="14" height="14"><use href="#i-closed"/></svg>
<span class="tl" style="left:79px;top:617px">SNTP</span>
<svg class="ic" style="left:48px;top:637px" width="9" height="9"><use href="#i-plus"/></svg>
<i class="hd" style="left:58px;top:641px;width:5px"></i>
<svg class="ic" style="left:64px;top:634.2px" width="14" height="14"><use href="#i-closed"/></svg>
<span class="tl" style="left:79px;top:633px">LLDP</span>
<svg class="ic" style="left:29px;top:653px" width="9" height="9"><use href="#i-plus"/></svg>
<i class="hd" style="left:39px;top:657px;width:5px"></i>
<svg class="ic" style="left:45px;top:650.2px" width="14" height="14"><use href="#i-closed"/></svg>
<span class="tl" style="left:60px;top:649px">L3 Functions</span>
<svg class="ic" style="left:29px;top:669px" width="9" height="9"><use href="#i-plus"/></svg>
<i class="hd" style="left:39px;top:673px;width:5px"></i>
<svg class="ic" style="left:45px;top:666.2px" width="14" height="14"><use href="#i-closed"/></svg>
<span class="tl" style="left:60px;top:665px">QoS</span>
<svg class="ic" style="left:29px;top:685px" width="9" height="9"><use href="#i-plus"/></svg>
<i class="hd" style="left:39px;top:689px;width:5px"></i>
<svg class="ic" style="left:45px;top:682.2px" width="14" height="14"><use href="#i-closed"/></svg>
<span class="tl" style="left:60px;top:681px">Security</span>
<svg class="ic" style="left:29px;top:701px" width="9" height="9"><use href="#i-plus"/></svg>
<i class="hd" style="left:39px;top:705px;width:5px"></i>
<svg class="ic" style="left:45px;top:698.2px" width="14" height="14"><use href="#i-closed"/></svg>
<span class="tl" style="left:60px;top:697px">AAA</span>
<svg class="ic" style="left:29px;top:717px" width="9" height="9"><use href="#i-plus"/></svg>
<i class="hd" style="left:39px;top:721px;width:5px"></i>
<svg class="ic" style="left:45px;top:714.2px" width="14" height="14"><use href="#i-closed"/></svg>
<span class="tl" style="left:60px;top:713px">ACL</span>
<svg class="ic" style="left:29px;top:733px" width="9" height="9"><use href="#i-plus"/></svg>
<i class="hd" style="left:39px;top:737px;width:5px"></i>
<svg class="ic" style="left:45px;top:730.2px" width="14" height="14"><use href="#i-closed"/></svg>
<span class="tl" style="left:60px;top:729px">SNMP</span>
<svg class="ic" style="left:29px;top:749px" width="9" height="9"><use href="#i-plus"/></svg>
<i class="hd" style="left:39px;top:753px;width:5px"></i>
<svg class="ic" style="left:45px;top:746.2px" width="14" height="14"><use href="#i-closed"/></svg>
<span class="tl" style="left:60px;top:745px">Monitoring</span>
<i class="vd" style="left:33px;top:170px;height:3px"></i>
<i class="vd" style="left:33px;top:181px;height:263px"></i>
<i class="vd" style="left:33px;top:453px;height:7px"></i>
<i class="vd" style="left:33px;top:469px;height:183px"></i>
<i class="vd" style="left:33px;top:661px;height:7px"></i>
<i class="vd" style="left:33px;top:677px;height:7px"></i>
<i class="vd" style="left:33px;top:693px;height:7px"></i>
<i class="vd" style="left:33px;top:709px;height:7px"></i>
<i class="vd" style="left:33px;top:725px;height:7px"></i>
<i class="vd" style="left:33px;top:741px;height:7px"></i>
<i class="vd" style="left:52px;top:184px;height:68px"></i>
<i class="vd" style="left:52px;top:261px;height:23px"></i>
<i class="vd" style="left:52px;top:293px;height:39px"></i>
<i class="vd" style="left:52px;top:341px;height:93px"></i>
<i class="vd" style="left:52px;top:472px;height:52px"></i>
<i class="vd" style="left:52px;top:533px;height:7px"></i>
<i class="vd" style="left:52px;top:549px;height:7px"></i>
<i class="vd" style="left:52px;top:565px;height:39px"></i>
<i class="vd" style="left:52px;top:613px;height:7px"></i>
<i class="vd" style="left:52px;top:629px;height:7px"></i>
<i class="vd" style="left:71px;top:568px;height:26px"></i>

<div id="frame"></div>
<div id="panel"></div>
<div class="abs" style="left:1240px;top:186px;width:1px;height:593px;background:#d9eefa"></div>
<div id="ptitle"></div>
<div id="ptxt">LACP Port Settings</div>
<svg class="abs" style="left:1100px;top:160px" width="130" height="22">
<defs><radialGradient id="gg" cx=".4" cy=".35" r=".7"><stop offset="0" stop-color="#9cf03a"/><stop offset=".6" stop-color="#5fd80a"/><stop offset="1" stop-color="#3fae06"/></radialGradient></defs>
<circle cx="14" cy="10.5" r="8.2" fill="url(#gg)"/>
<text x="32" y="17" font-family="'DejaVu Sans','Liberation Sans',sans-serif" font-size="13.6" fill="#eaf4fd" opacity=".65" stroke="#eaf4fd" stroke-width=".5" textLength="92" lengthAdjust="spacingAndGlyphs">Safeguard</text><text x="31" y="16" font-family="'DejaVu Sans','Liberation Sans',sans-serif" font-size="13.6" fill="#3f6f97" stroke="#3f6f97" stroke-width=".5" textLength="92" lengthAdjust="spacingAndGlyphs">Safeguard</text>
</svg>

<span class="lbl" style="left:303px">From Port</span>
<span class="lbl" style="left:482px">To Port</span>
<span class="lbl" style="left:660px">Activity</span>
<span class="lbl" style="left:839px">Timeout</span>
<div class="selb" style="left:303px;width:100px"><span style="left:27px">07</span><svg width="10" height="6"><path d="M1 1l4 4 4-4" fill="none" stroke="#000" stroke-width="1.8"/></svg></div>
<div class="selb" style="left:482px;width:100px"><span style="left:27px">07</span><svg width="10" height="6"><path d="M1 1l4 4 4-4" fill="none" stroke="#000" stroke-width="1.8"/></svg></div>
<div class="selb" style="left:660px;width:100px"><span style="left:4px">Passive</span><svg width="10" height="6"><path d="M1 1l4 4 4-4" fill="none" stroke="#000" stroke-width="1.8"/></svg></div>
<div class="selb" style="left:839px;width:113px"><span style="left:4px">Long (90 sec)</span><svg width="10" height="6"><path d="M1 1l4 4 4-4" fill="none" stroke="#000" stroke-width="1.8"/></svg></div>
<div id="apply">Apply</div>

<div id="tbl"></div>
<div class="th" style="left:304px;width:84px">Port</div>
<div class="th" style="left:388px;width:124px">Activity</div>
<div class="th" style="left:512px;width:692px">Timeout</div>
<div class="tr" style="top:312px"><span class="c1">01</span><span class="c2">Active</span><span class="c3">Long (90 sec)</span></div>
<div class="tr" style="top:328px"><span class="c1">02</span><span class="c2">Active</span><span class="c3">Long (90 sec)</span></div>
<div class="tr" style="top:344px"><span class="c1">03</span><span class="c2">Active</span><span class="c3">Long (90 sec)</span></div>
<div class="tr" style="top:360px"><span class="c1">04</span><span class="c2">Active</span><span class="c3">Long (90 sec)</span></div>
<div class="tr" style="top:376px"><span class="c1">05</span><span class="c2">Active</span><span class="c3">Long (90 sec)</span></div>
<div class="tr" style="top:392px"><span class="c1">06</span><span class="c2">Active</span><span class="c3">Long (90 sec)</span></div>
<div class="tr" style="top:408px"><span class="c1">07</span><span class="c2">Active</span><span class="c3">Long (90 sec)</span></div>
<div class="tr" style="top:424px"><span class="c1">08</span><span class="c2">Active</span><span class="c3">Long (90 sec)</span></div>
<div class="tr" style="top:440px"><span class="c1">09</span><span class="c2">Active</span><span class="c3">Long (90 sec)</span></div>
<div class="tr" style="top:456px"><span class="c1">10</span><span class="c2">Active</span><span class="c3">Long (90 sec)</span></div>
<div class="tr" style="top:472px"><span class="c1">11</span><span class="c2">Active</span><span class="c3">Long (90 sec)</span></div>
<div class="tr" style="top:488px"><span class="c1">12</span><span class="c2">Active</span><span class="c3">Long (90 sec)</span></div>
<div class="tr" style="top:504px"><span class="c1">13</span><span class="c2">Active</span><span class="c3">Long (90 sec)</span></div>
<div class="tr" style="top:520px"><span class="c1">14</span><span class="c2">Active</span><span class="c3">Long (90 sec)</span></div>
<div class="tr" style="top:536px"><span class="c1">15</span><span class="c2">Active</span><span class="c3">Long (90 sec)</span></div>
<div class="tr" style="top:552px"><span class="c1">16</span><span class="c2">Active</span><span class="c3">Long (90 sec)</span></div>
<div class="tr" style="top:568px"><span class="c1">17</span><span class="c2">Active</span><span class="c3">Long (90 sec)</span></div>
<div class="tr" style="top:584px"><span class="c1">18</span><span class="c2">Active</span><span class="c3">Long (90 sec)</span></div>
<div class="tr" style="top:600px"><span class="c1">19</span><span class="c2">Active</span><span class="c3">Long (90 sec)</span></div>
<div class="tr" style="top:616px"><span class="c1">20</span><span class="c2">Active</span><span class="c3">Long (90 sec)</span></div>
<div class="tr" style="top:632px"><span class="c1">21</span><span class="c2">Active</span><span class="c3">Long (90 sec)</span></div>
<div class="tr" style="top:648px"><span class="c1">22</span><span class="c2">Active</span><span class="c3">Long (90 sec)</span></div>
<div class="tr" style="top:664px"><span class="c1">23</span><span class="c2">Active</span><span class="c3">Long (90 sec)</span></div>
<div class="tr" style="top:680px"><span class="c1">24</span><span class="c2">Active</span><span class="c3">Long (90 sec)</span></div>
<div class="tr" style="top:696px"><span class="c1">25</span><span class="c2">Active</span><span class="c3">Long (90 sec)</span></div>
<div class="tr" style="top:712px"><span class="c1">26</span><span class="c2">Active</span><span class="c3">Long (90 sec)</span></div>
<div class="tr" style="top:728px"><span class="c1">27</span><span class="c2">Active</span><span class="c3">Long (90 sec)</span></div>
<div class="tr" style="top:744px"><span class="c1">28</span><span class="c2">Active</span><span class="c3">Long (90 sec)</span></div>
<div class="tr" style="top:760px"><span class="c1">29</span><span class="c2">Active</span><span class="c3">Long (90 sec)</span></div>
<div id="vr"></div><div id="sb"></div><div id="sbth"></div>
<svg class="abs" style="left:1209px;top:298px" width="9" height="6"><path d="M.5 5.2L4.5 1.2 8.5 5.2z" fill="#a3a3a3"/></svg>
<svg class="abs" style="left:1209px;top:761px" width="9" height="6"><path d="M.5 .8L4.5 4.8 8.5 .8z" fill="#505050"/></svg>
<div class="abs" style="left:286px;top:772px;width:954px;height:7px;background:#e4eaec"></div>

<div id="dlg"></div>
<div id="dt">Подтвердите действие на странице</div>
<div id="dm">LACP member ports must be in the same activity and timeout.</div>
<div id="ok">OK</div>
<svg class="abs" style="left:0;top:0" width="1249" height="45"><path d="M1001.0 26.6 L1003.2 27.5 L1004.9 25.9 L1006.9 26.5 L1009.3 28.0 L1012.1 26.2 L1015.3 27.1 L1018.2 25.8 L1020.9 26.4 L1024.1 26.8 L1027.4 27.4 L1029.6 27.5 L1033.0 27.7 L1034.8 25.9 L1037.2 26.9 L1039.7 26.3 L1042.3 26.7 L1045.2 27.6 L1048.7 26.8 L1051.9 27.5 L1054.6 26.8 L1057.7 26.4 L1059.3 27.1 L1061.0 27.0 L1062.8 25.6 L1066.1 24.9 L1067.7 26.6 L1070.9 27.2 L1074.4 25.4 L1077.1 24.7 L1079.4 26.1 L1079.4 33.4 L1077.1 33.6 L1074.4 33.4 L1070.9 34.6 L1067.7 34.3 L1066.1 35.1 L1062.8 35.6 L1061.0 34.7 L1059.3 36.3 L1057.7 34.5 L1054.6 34.5 L1051.9 36.4 L1048.7 34.6 L1045.2 36.5 L1042.3 36.7 L1039.7 35.4 L1037.2 35.4 L1034.8 37.2 L1033.0 35.0 L1029.6 36.0 L1027.4 37.3 L1024.1 36.9 L1020.9 35.3 L1018.2 37.3 L1015.3 37.3 L1012.1 37.2 L1009.3 36.9 L1006.9 38.3 L1004.9 38.0 L1003.2 37.5 L1001.0 37.4z" fill="#000" stroke="#000" stroke-width=".8" stroke-linejoin="round"/><circle cx="1039.4" cy="30.5" r="0.9" fill="#fff"/><circle cx="1040.7" cy="31.0" r="0.6" fill="#fff"/><circle cx="1024.8" cy="33.2" r="0.7" fill="#fff"/><circle cx="1026.5" cy="33.0" r="0.9" fill="#fff"/><circle cx="1024.3" cy="31.4" r="0.8" fill="#fff"/><circle cx="1013.0" cy="30.4" r="0.9" fill="#fff"/><circle cx="1024.9" cy="32.4" r="0.4" fill="#fff"/><circle cx="1020.4" cy="32.6" r="0.4" fill="#fff"/><circle cx="1028.9" cy="33.1" r="0.4" fill="#fff"/><circle cx="1029.3" cy="31.7" r="0.7" fill="#fff"/><circle cx="1017.8" cy="33.7" r="0.8" fill="#fff"/><circle cx="1003.9" cy="28.5" r="0.7" fill="#fff"/><circle cx="1043.5" cy="30.0" r="0.6" fill="#fff"/><circle cx="1027.9" cy="30.6" r="0.6" fill="#fff"/><circle cx="1016.1" cy="31.0" r="0.7" fill="#fff"/><circle cx="1015.6" cy="31.0" r="0.8" fill="#fff"/></svg>
</body>
</html>
